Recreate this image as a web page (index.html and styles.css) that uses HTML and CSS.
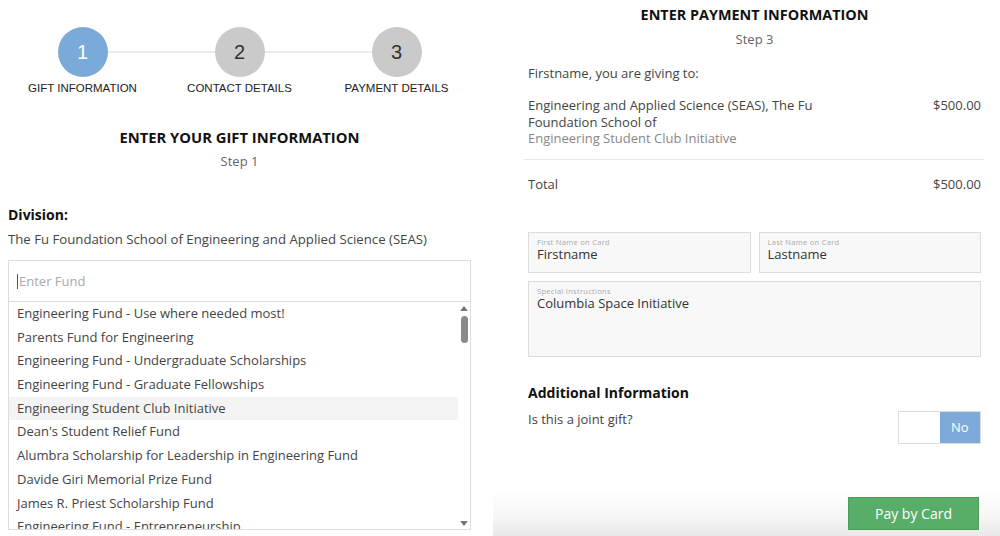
FILE: index.html
```html
<!DOCTYPE html>
<html lang="en">
<head>
<meta charset="utf-8">
<title>Gift</title>
<link rel="stylesheet" href="styles.css">
</head>
<body>
<div class="page">
  <section class="left">
    <div class="stepper">
      <div class="step active"><div class="circle">1</div><div class="step-label">GIFT INFORMATION</div></div>
      <div class="step"><div class="circle">2</div><div class="step-label">CONTACT DETAILS</div></div>
      <div class="step"><div class="circle">3</div><div class="step-label">PAYMENT DETAILS</div></div>
    </div>
    <h2 class="title">ENTER YOUR GIFT INFORMATION</h2>
    <div class="subtitle">Step 1</div>
    <div class="division-label">Division:</div>
    <div class="division-text">The Fu Foundation School of Engineering and Applied Science (SEAS)</div>
    <div class="fund-box">
      <div class="fund-input"><span class="caret"></span>Enter Fund</div>
      <div class="fund-list">
        <ul class="items">
          <li>Engineering Fund - Use where needed most!</li>
          <li>Parents Fund for Engineering</li>
          <li>Engineering Fund - Undergraduate Scholarships</li>
          <li>Engineering Fund - Graduate Fellowships</li>
          <li class="hover">Engineering Student Club Initiative</li>
          <li>Dean's Student Relief Fund</li>
          <li>Alumbra Scholarship for Leadership in Engineering Fund</li>
          <li>Davide Giri Memorial Prize Fund</li>
          <li>James R. Priest Scholarship Fund</li>
          <li>Engineering Fund - Entrepreneurship</li>
        </ul>
        <div class="scrollbar">
          <span class="arrow up"></span>
          <span class="thumb"></span>
          <span class="track"></span>
          <span class="arrow down"></span>
        </div>
      </div>
    </div>
  </section>
  <section class="right">
    <h2 class="title">ENTER PAYMENT INFORMATION</h2>
    <div class="subtitle">Step 3</div>
    <div class="giving">Firstname, you are giving to:</div>
    <div class="line-item">
      <div class="item-desc">Engineering and Applied Science (SEAS), The Fu<br>Foundation School of<br><span class="muted">Engineering Student Club Initiative</span></div>
      <div class="item-price">$500.00</div>
    </div>
    <div class="total">
      <div>Total</div>
      <div>$500.00</div>
    </div>
    <div class="fields">
      <div class="field-row">
        <div class="field"><div class="field-label">First Name on Card</div><div class="field-value">Firstname</div></div>
        <div class="field"><div class="field-label">Last Name on Card</div><div class="field-value">Lastname</div></div>
      </div>
      <div class="field tall"><div class="field-label">Special Instructions</div><div class="field-value">Columbia Space Initiative</div></div>
    </div>
    <div class="add-title">Additional Information</div>
    <div class="joint-row">
      <div class="joint-q">Is this a joint gift?</div>
      <div class="toggle"><span class="t-off"></span><span class="t-on">No</span></div>
    </div>
    <div class="footer">
      <button class="pay">Pay by Card</button>
    </div>
  </section>
</div>
</body>
</html>
```
FILE: styles.css
```css
* { box-sizing: border-box; }
html, body { margin: 0; padding: 0; background: #fff; }
body {
  font-family: "Open Sans", "Noto Sans", sans-serif;
  color: #444;
  font-size: 13px;
  width: 1000px;
  height: 536px;
  overflow: hidden;
}
.page { display: flex; height: 536px; }

.left { width: 479px; padding: 0 8px; display: flex; flex-direction: column; }
.right { flex: 1; margin-left: 14px; display: flex; flex-direction: column; padding: 0 19px 0 35px; }

/* stepper */
.stepper { display: flex; padding-top: 27px; margin-left: -4px; }
.step { width: 157px; flex: none; display: flex; flex-direction: column; align-items: center; position: relative; }
.step + .step::before {
  content: ""; position: absolute; top: 24px; left: -50%; width: 100%; height: 2px; background: #ececec; z-index: 0;
}
.circle {
  width: 50px; height: 50px; border-radius: 50%; background: #cacaca; color: #333;
  font-family: "Liberation Sans", Arial, sans-serif; font-size: 20px;
  display: flex; align-items: center; justify-content: center; position: relative; z-index: 1;
}
.step.active .circle { background: #7aaad8; color: #fff; }
.step-label {
  margin-top: 4px; font-family: "Liberation Sans", Arial, sans-serif; font-size: 11.5px; line-height: 14px; color: #222; white-space: nowrap;
}

.title {
  margin: 0; font-family: "Open Sans", sans-serif; font-weight: 700; font-size: 14.75px; line-height: 20px; text-align: center; color: #111;
}
.left .title { margin-top: 32px; }
.right .title { margin-top: 5px; font-size: 14.4px; }
.subtitle { margin-top: 5px; text-align: center; font-size: 13px; line-height: 18px; color: #666; }

.division-label { margin-top: 35px; font-weight: 700; font-size: 14px; line-height: 20px; color: #111; }
.division-text { margin-top: 5px; line-height: 18px; color: #444; font-size: 13.2px; }

.fund-box { margin-top: 12px; width: 463px; border: 1px solid #ddd; }
.fund-input { height: 41px; padding-left: 8px; display: flex; align-items: center; color: #aaa; font-size: 13px; border-bottom: 1px solid #ddd; }
.caret { width: 1px; height: 15px; background: #555; margin-right: 1px; }
.fund-list { display: flex; height: 227px; overflow: hidden; }
.items { list-style: none; margin: 0; padding: 0; flex: 1; }
.items li { height: 23.7px; line-height: 23.7px; padding-left: 8px; color: #444; white-space: nowrap; }
.items li.hover { background: #f4f4f4; }
.scrollbar { width: 12px; display: flex; flex-direction: column; align-items: center; padding: 4px 0 3px; }
.arrow { width: 0; height: 0; border-left: 4px solid transparent; border-right: 4px solid transparent; }
.arrow.up { border-bottom: 5px solid #777; }
.arrow.down { border-top: 5px solid #777; }
.thumb { width: 7px; height: 27px; background: #8a8a8a; border-radius: 4px; margin-top: 5px; }
.track { flex: 1; }

/* right */
.giving { margin-top: 16px; line-height: 18px; }
.line-item { margin-top: 15px; display: flex; justify-content: space-between; padding-bottom: 12px; border-bottom: 1px solid #e8e8e8; margin-left: -4px; margin-right: -3px; padding-left: 4px; padding-right: 3px; }
.item-desc { line-height: 16.5px; }
.muted { color: #888; }
.item-price { line-height: 16.5px; }
.total { margin-top: 15px; display: flex; justify-content: space-between; line-height: 18px; }

.fields { margin-top: 39px; display: flex; flex-direction: column; gap: 8px; }
.field-row { display: flex; gap: 8px; }
.field { flex: 1; height: 41px; background: #f8f8f8; border: 1.5px solid #ddd; padding: 4px 8px 0; }
.field.tall { flex: none; height: 76px; }
.field-label { font-size: 7.5px; line-height: 10px; color: #aaa; letter-spacing: 0.3px; }
.field-value { font-size: 13px; line-height: 15px; color: #333; }

.add-title { margin-top: 26px; font-weight: 700; font-size: 14px; line-height: 20px; color: #111; }
.joint-row { margin-top: 8px; display: flex; justify-content: space-between; align-items: flex-start; }
.joint-q { line-height: 16px; margin-top: 0; }
.toggle { display: flex; width: 83px; height: 33px; border: 1px solid #ddd; }
.t-off { flex: 1; background: #fff; }
.t-on { flex: 1; background: #7eaad9; color: #fff; display: flex; align-items: center; justify-content: center; font-size: 13px; }

.footer {
  margin-top: auto; margin-left: -35px; margin-right: -19px; height: 46px;
  background: linear-gradient(to bottom, #ffffff 0%, #f6f6f6 60%, #e8e8e8 100%);
  display: flex; justify-content: flex-end; align-items: flex-start; padding: 7px 21px 0 0;
}
.pay {
  width: 131px; height: 33px; background: #58ad69; border: 1px solid #4d9c5c; color: #fff;
  font-family: "Open Sans", sans-serif; font-size: 14px; cursor: pointer; padding: 0;
}
```
